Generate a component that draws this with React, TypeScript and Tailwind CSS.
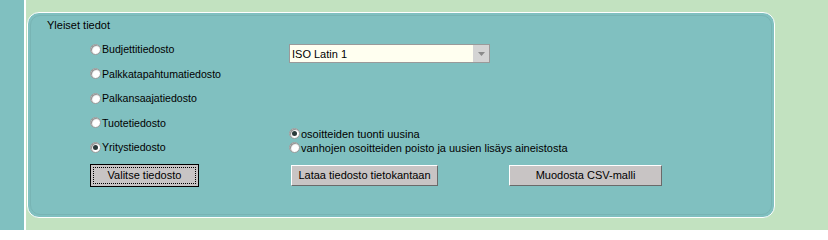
import React from 'react';

const font = { fontFamily: '"Liberation Sans", Arial, sans-serif' };

function Radio({ checked }: { checked?: boolean }) {
  return (
    <span className="relative inline-flex h-[11px] w-[11px] shrink-0 items-center justify-center rounded-full border border-[#9a9a9a] bg-white shadow-[inset_1px_1px_1px_#8a8a8a]">
      {checked && <span className="h-[5px] w-[5px] rounded-full bg-[#2a3a3a]" />}
    </span>
  );
}

function RadioItem({ label, checked }: { label: string; checked?: boolean }) {
  return (
    <label className="flex h-[24.5px] items-center gap-[1px] text-[10.6px] leading-[14px] text-black">
      <Radio checked={checked} />
      <span>{label}</span>
    </label>
  );
}

function Btn({ label, className, focused }: { label: string; className: string; focused?: boolean }) {
  return (
    <button
      className={`flex h-[21px] items-center justify-center bg-[#c8c4c4] text-[11px] leading-[14px] text-black ${
        focused
          ? 'border border-black p-[2px]'
          : 'border border-t-white border-l-white border-b-[#6a6a6a] border-r-[#6a6a6a]'
      } ${className}`}
    >
      {focused ? (
        <span className="flex h-full w-full items-center justify-center border border-dotted border-black">{label}</span>
      ) : (
        label
      )}
    </button>
  );
}

export default function App() {
  return (
    <div className="flex h-[230px] w-[828px] overflow-hidden bg-[#c2e2c0]" style={font}>
      <div className="h-full w-[24px] bg-[#80c0c0]" />
      <div className="h-full w-[2px] bg-white" />
      <div className="flex-1 pt-[12px] pl-[1px]">
        <div className="h-[206px] w-[748px] rounded-[12px] border border-white bg-[#80c0c0] p-[2px]">
          <div className="h-full w-full rounded-[10px] border border-[#78b4b4] pl-[16px] pt-[2px]">
            <div className="text-[11px] leading-[14px] text-black">Yleiset tiedot</div>
            <div className="mt-[5px] ml-[43px] flex">
              <div className="flex w-[199px] flex-col">
                <RadioItem label="Budjettitiedosto" />
                <RadioItem label="Palkkatapahtumatiedosto" />
                <RadioItem label="Palkansaajatiedosto" />
                <RadioItem label="Tuotetiedosto" />
                <RadioItem label="Yritystiedosto" checked />
              </div>
              <div className="flex flex-col justify-between pt-[7px] pb-[5px]">
                <div className="flex h-[19px] w-[201px] items-center border border-[#9a9a9a] bg-[#fffff0]">
                  <span className="flex-1 pl-[2px] text-[11px] leading-[14px]">ISO Latin 1</span>
                  <span className="flex h-[17px] w-[16px] items-center justify-center bg-[#d4d4d4]">
                    <svg width="7" height="4" viewBox="0 0 7 4">
                      <path d="M0 0h7L3.5 4z" fill="#8a8a8a" />
                    </svg>
                  </span>
                </div>
                <div className="flex flex-col">
                  <label className="flex h-[14px] items-center gap-[1px] text-[11px] leading-[14px]">
                    <Radio checked />
                    <span>osoitteiden tuonti uusina</span>
                  </label>
                  <label className="flex h-[14px] items-center gap-[1px] text-[11px] leading-[14px]">
                    <Radio />
                    <span>vanhojen osoitteiden poisto ja uusien lisäys aineistosta</span>
                  </label>
                </div>
              </div>
            </div>
            <div className="mt-[4px] ml-[43px] flex items-center">
              <Btn label="Valitse tiedosto" className="w-[109px] h-[23px]" focused />
              <Btn label="Lataa tiedosto tietokantaan" className="ml-[92px] w-[147px]" />
              <Btn label="Muodosta CSV-malli" className="ml-[71px] w-[153px]" />
            </div>
          </div>
        </div>
      </div>
    </div>
  );
}
